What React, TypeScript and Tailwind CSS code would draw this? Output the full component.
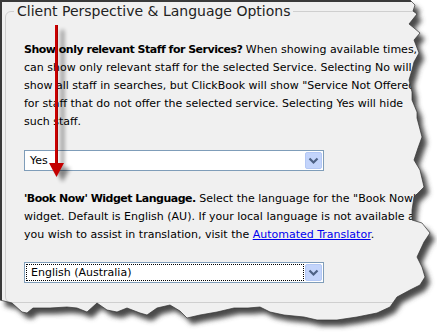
import React from "react";

const EDGE_PTS: [number, number][] = [
  [410, 0], [415, 5], [413, 11], [417, 14], [409, 24], [414, 28], [420, 33], [414, 40], [419, 53],
  [414, 62], [412, 70], [409, 80], [412, 92], [412, 100], [417, 112], [417, 118], [422, 137],
  [418, 148], [414, 160], [420, 170], [424, 187], [414, 197], [412, 210], [412, 220], [422, 223],
  [430, 233], [424, 242], [417, 257], [422, 267], [425, 277], [420, 285], [410, 290], [397, 297],
  [390, 307], [377, 313], [357, 317], [337, 320], [317, 320], [304, 317], [284, 315], [270, 312],
  [260, 307], [248, 308], [234, 308], [217, 312], [200, 315], [187, 318], [180, 311], [170, 305],
  [157, 308], [147, 315], [140, 313], [127, 308], [117, 312], [107, 310], [97, 303], [87, 312],
  [77, 308], [67, 307], [50, 308], [33, 308], [27, 313], [22, 312], [12, 303], [0, 300],
];

const tearLine = "M" + EDGE_PTS.map((p) => p.join(",")).join(" L");
const pageShape = "M0,0 " + EDGE_PTS.map((p) => "L" + p.join(",")).join(" ") + " Z";

function Chevron() {
  return (
    <div className="w-[17px] h-[17px] rounded-[2px] border border-[#b4c8f5] bg-[#c3d4fb] flex items-center justify-center">
      <svg width="15" height="15" viewBox="0 0 15 15">
        <polyline points="3.5,5.5 7.5,9.5 11.5,5.5" fill="none" stroke="#4d6185" strokeWidth="2.2" />
      </svg>
    </div>
  );
}

function FakeSelect({ value, focused }: { value: string; focused?: boolean }) {
  return (
    <div className="w-[300px] h-[21px] border border-[#7f9db9] bg-white flex items-center p-[1px]">
      <div
        className={
          "flex-1 h-[17px] flex items-center pl-[4px] text-[11px] leading-[17px] text-black mr-[1px] " +
          (focused ? "border border-dotted border-black pl-[3px]" : "")
        }
      >
        {value}
      </div>
      <Chevron />
    </div>
  );
}

export default function App() {
  return (
    <div className="relative w-[437px] h-[333px] overflow-hidden bg-white font-['DejaVu_Sans',sans-serif]">
      <div className="w-full h-full bg-[#f0f0f0] border-t-2 border-l-2 border-[#3a3a3a] pl-[3px] pt-[1px]">
        <fieldset className="w-[470px] rounded-[6px] border border-[#cfcfcf]">
          <legend className="ml-[8px] px-[3px] text-[14px] leading-[16px] text-[#222]">
            Client Perspective &amp; Language Options
          </legend>
          <div className="pl-[18px] pt-[22px] pb-[19px] text-[11px] leading-[18px] text-black whitespace-nowrap">
            <div>
              <span className="font-bold tracking-[-0.5px]">Show only relevant Staff for Services?</span> When showing available times, you
            </div>
            <div>can show only relevant staff for the selected Service. Selecting No will</div>
            <div>show all staff in searches, but ClickBook will show "Service Not Offered"</div>
            <div>for staff that do not offer the selected service. Selecting Yes will hide</div>
            <div>such staff.</div>
            <div className="mt-[19px]">
              <FakeSelect value="Yes" />
            </div>
            <div className="mt-[19px]">
              <div>
                <span className="font-bold tracking-[-0.5px]">'Book Now' Widget Language.</span> Select the language for the "Book Now"
              </div>
              <div>widget. Default is English (AU). If your local language is not available and</div>
              <div>
                you wish to assist in translation, visit the{" "}
                <a className="text-[#0000ee] underline">Automated Translator</a>.
              </div>
            </div>
            <div className="mt-[18px]">
              <FakeSelect value="English (Australia)" focused />
            </div>
          </div>
        </fieldset>
      </div>

      {/* red arrow annotation */}
      <svg className="absolute left-0 top-0 pointer-events-none" width="437" height="333">
        <defs>
          <filter id="ashadow" x="-50%" y="-10%" width="200%" height="120%">
            <feGaussianBlur stdDeviation="2.2" />
          </filter>
        </defs>
        <g transform="translate(6,5)" opacity="0.45" filter="url(#ashadow)">
          <rect x="55" y="25" width="3" height="140" fill="#000" />
          <polygon points="49,163 64,163 56.5,177" fill="#000" />
        </g>
        <rect x="55" y="25" width="3" height="140" fill="#cc0000" />
        <rect x="57.2" y="25" width="0.8" height="140" fill="#9a0000" />
        <polygon points="49,163 64,163 56.5,177" fill="#c40000" />
      </svg>

      {/* torn paper edge */}
      <svg className="absolute left-0 top-0 pointer-events-none" width="437" height="333">
        <defs>
          <mask id="outside">
            <rect width="437" height="333" fill="white" />
            <path d={pageShape} fill="black" />
          </mask>
          <filter id="tshadow" x="-10%" y="-10%" width="120%" height="120%">
            <feGaussianBlur stdDeviation="2.6" />
          </filter>
        </defs>
        <g mask="url(#outside)">
          <rect width="437" height="333" fill="white" />
          <path d={pageShape} transform="translate(5,6)" fill="#4a4a4a" filter="url(#tshadow)" />
        </g>
        <path d={tearLine} fill="none" stroke="#333" strokeWidth="0.7" />
      </svg>
    </div>
  );
}
